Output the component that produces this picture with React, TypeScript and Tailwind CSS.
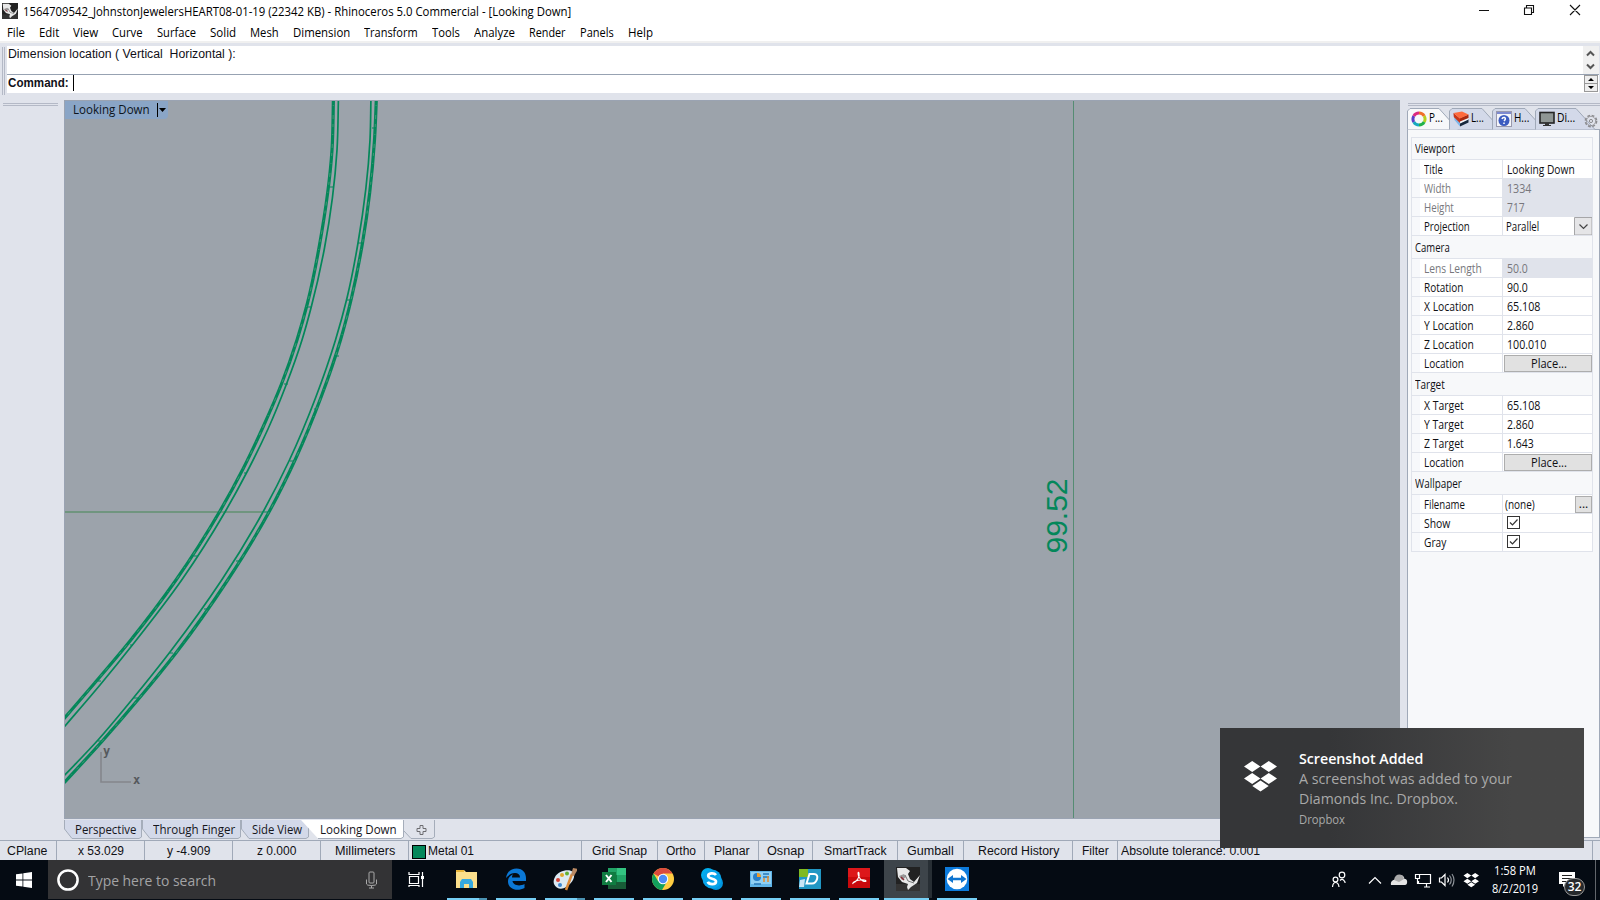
import { useLayoutEffect, useRef, useState } from "react";
import type { ReactNode } from "react";

type Pt = [number, number];

const UI = "font-['Open_Sans','Noto_Sans',sans-serif]";
const ARIAL = "font-['Liberation_Sans',Arial,sans-serif]";

/** Single line of text condensed or stretched to an exact width. */
function Fit({ w, children, className = "" }: { w: number; children: string; className?: string }) {
  const ref = useRef<HTMLSpanElement>(null);
  const [k, setK] = useState(1);
  useLayoutEffect(() => {
    if (ref.current) setK(w / ref.current.offsetWidth);
  }, [w, children]);
  return (
    <span className={`inline-block shrink-0 whitespace-pre ${className}`} style={{ width: w }}>
      <span ref={ref} className="inline-block origin-left" style={{ transform: `scaleX(${k})` }}>
        {children}
      </span>
    </span>
  );
}

/** Cubic Hermite path through points that descend in y. */
function smooth(p: Pt[]) {
  const s = p.slice(1).map((q, i) => (q[0] - p[i][0]) / (q[1] - p[i][1]));
  const m = p.map((_, i) => {
    if (i === 0) return s[0];
    if (i === p.length - 1) return s[i - 1];
    const h0 = p[i][1] - p[i - 1][1];
    const h1 = p[i + 1][1] - p[i][1];
    return (s[i - 1] * h1 + s[i] * h0) / (h0 + h1);
  });
  let d = `M${p[0][0]} ${p[0][1]}`;
  for (let i = 0; i < p.length - 1; i++) {
    const [x0, y0] = p[i];
    const [x1, y1] = p[i + 1];
    const t = (y1 - y0) / 3;
    d += `C${x0 + m[i] * t} ${y0 + t} ${x1 - m[i + 1] * t} ${y1 - t} ${x1} ${y1}`;
  }
  return d;
}

const CURVE_A: Pt[] = [[333.5, 95], [332, 150], [319.500, 245], [307.500, 303], [297, 340], [281.5, 384], [263.500, 426], [243.5, 468], [220, 511], [176, 580], [130, 641], [93, 685], [62, 721]];
const CURVE_B: Pt[] = [[338.5, 95], [337, 150], [324.500, 248], [311, 308], [302, 340], [286.500, 384], [268, 429], [247.5, 471], [225, 512], [181.7, 580], [134, 643], [100, 685], [62, 729.5]];
const CURVE_C: Pt[] = [[371, 95], [370, 140], [358, 243], [347, 298], [335.5, 340], [315.5, 398], [289, 461], [263, 512], [221.7, 580], [170, 652], [131.7, 700], [98, 740], [62, 778]];
const CURVE_D: Pt[] = [[376.5, 95], [374.5, 140], [362.5, 243], [351.5, 298], [340.5, 340], [321.5, 396], [295.500, 459], [269, 512], [227.7, 580], [176.7, 652], [137.7, 700], [101.7, 741.7], [62, 785]];
const TICKS: [number, number, number][] = [[372, 128, 4], [329, 187, 4], [358, 243, 5], [307, 307, 4], [347, 300, 4], [335, 356, 4], [284, 384, 4], [314, 409, 4], [244, 473, 3], [290, 461, 4], [264, 512, 4], [194, 556, 3], [236, 561, 3], [204, 609, 3], [170, 653, 3], [130, 645, 3], [98, 681, 3], [134, 698, 4], [98, 741, 3]];

const MENU: [string, number, number][] = [
  ["File", 18, 14], ["Edit", 20, 14], ["View", 25, 14], ["Curve", 31, 14], ["Surface", 39, 14], ["Solid", 26, 14], ["Mesh", 29, 14],
  ["Dimension", 57, 14], ["Transform", 54, 14], ["Tools", 28, 14], ["Analyze", 41, 14], ["Render", 37, 14], ["Panels", 34, 14], ["Help", 25, 0],
];

function TitleBar() {
  return (
    <div className={`flex h-[21px] items-start text-[12px] leading-[24px] ${UI}`}>
      <span className="ml-[2px] mt-[3px]"><Rhino size={16} /></span>
      <Fit w={548} className="ml-[5px]">1564709542_JohnstonJewelersHEART08-01-19 (22342 KB) - Rhinoceros 5.0 Commercial - [Looking Down]</Fit>
      <svg width="122" height="20" className="ml-auto" fill="none" stroke="#111" strokeWidth="1.1">
        <path d="M1 10.500H11M46.500 8H53.500V14.500H46.500ZM48.500 8V5.500H55.500V12.500H53.500M92 5L102 15M102 5L92 15" />
      </svg>
    </div>
  );
}

function Rhino({ size }: { size: number }) {
  return (
    <svg width={size} height={size} viewBox="0 0 24 24">
      <rect width="24" height="24" fill="#222" />
      <rect y="17" width="24" height="7" fill="#343434" />
      <path d="M1 1H10L14 4L12 7L14 12L18 15L24 8L21 16L15 20L12 23L11 20L12 17L6 15L2 10Z" fill="#e8e8e8" />
      <path d="M2 3L6 6M3 9L8 7L10 10L6 13Z" fill="#999" />
      <path d="M5 10L8 13" stroke="#8b2a35" strokeWidth="1.500" />
      <path d="M12 14L18 16M9 8L12 14" stroke="#777" strokeWidth="1" />
    </svg>
  );
}

function CommandArea() {
  return (
    <div className="flex h-[57px] bg-[#e0e3eb] pr-px pt-[3px]">
      <div className="mr-px mt-[1px] h-[48px] w-[6px] pl-[2px]"><div className="h-full w-[3px] border-x border-[#b4b9c6]" /></div>
      <div className={`flex h-[47px] flex-1 flex-col bg-white text-[12px] text-[#101018] ${ARIAL}`}>
        <div className="flex h-[28px] justify-between">
          <Fit w={228} className="ml-[1px] leading-[16px]">Dimension location ( Vertical  Horizontal ):</Fit>
          <div className="w-[16px] bg-[#f0f0f0]">
            <svg width="16" height="28" fill="none" stroke="#555" strokeWidth="2"><path d="M4 9.500L7.500 6L11 9.500M4 18.500L7.500 22L11 18.500" /></svg>
          </div>
        </div>
        <div className="flex h-[19px] border-t border-[#97a2b2]">
          <Fit w={61} className="ml-[1px] font-bold leading-[16px]">Command:</Fit>
          <span className="ml-[4px] h-[16px] w-px bg-black" />
          <svg width="14" height="18" className="ml-auto mr-[1px]">
            <rect x=".5" y=".5" width="13" height="8" fill="#eee" stroke="#999" /><rect x=".5" y="8.500" width="13" height="8" fill="#eee" stroke="#999" />
            <path d="M4 6H10L7 3ZM4 11H10L7 14Z" fill="#000" />
          </svg>
        </div>
      </div>
    </div>
  );
}

function Viewport() {
  return (
    <div className="relative h-[719px] w-[1336px] border-b border-l border-t border-[#9aa3b2] bg-[#9ca3ab]">
      <svg width="1335" height="717" viewBox="65 101 1335 717" className="block" fill="none">
        <path d="M65 512H263" stroke="#70957f" strokeWidth="2" />
        <path d="M1073.500 101V818" stroke="#558c73" strokeWidth="1" />
        <g stroke="#04875a">
          <path d={smooth(CURVE_A)} strokeWidth="3.200" />
          <path d={smooth(CURVE_B)} strokeWidth="1.700" />
          <path d={smooth(CURVE_C)} strokeWidth="1.700" />
          <path d={smooth(CURVE_D)} strokeWidth="3.200" />
          {TICKS.map(([x, y, w]) => <path key={`${x}-${y}`} d={`M${x} ${y}h${w}`} strokeWidth="1" />)}
        </g>
        <g stroke="#5c9a80" strokeWidth=".7" strokeDasharray="3 7 1 9 4 5">
          <path d={smooth(CURVE_A)} />
          <path d={smooth(CURVE_D)} />
        </g>
        <path d="M101 752V782H131" stroke="#84868c" strokeWidth="1.600" />
        <text x="103" y="755" fill="#55585c" fontSize="12" fontWeight="700" fontFamily="DejaVu Sans Mono, monospace">y</text>
        <text x="133" y="784" fill="#55585c" fontSize="12" fontWeight="700" fontFamily="DejaVu Sans Mono, monospace">x</text>
        <text transform="translate(1067 553.500) rotate(-90)" fill="#04875a" fontSize="30" textLength="75" fontFamily="Liberation Sans, Arial, sans-serif">99.52</text>
      </svg>
      <div className={`absolute left-0 top-0 flex h-[18px] w-[103px] items-center rounded-br-sm bg-[#8aa5c6] text-[12px] text-[#0c1420] ${UI}`}>
        <Fit w={77} className="ml-[8px] leading-[18px]">Looking Down</Fit>
        <svg width="14" height="18" className="ml-[7px]"><path d="M.5 2V16" stroke="#000" /><path d="M2 7H9L5.500 11Z" fill="#000" /></svg>
      </div>
    </div>
  );
}

const VIEW_TABS: [string, number, number, number][] = [["Perspective", 78, 10, 61], ["Through Finger", 99, 10, 82], ["Side View", 68, 11, 50]];

function ViewTabs() {
  return (
    <div className={`flex h-[21px] pt-[1px] text-[12px] text-[#16161c] ${UI}`}>
      {VIEW_TABS.map(([label, w, pad, tw]) => (
        <Slant key={label} w={w} fill="#d3d9e9">
          <Fit w={tw} className="leading-[20px]">{label}</Fit>
          <span style={{ width: pad - 4 }} />
        </Slant>
      ))}
      <div className="relative h-[19px] w-[95px]">
        <svg width="103" height="19" className="absolute -left-2 top-0"><path d="M0 0H102V17L100 18.500H17Z" fill="#fff" /><path d="M17 18.500H100L102.500 17V0" fill="none" stroke="#a5adba" /></svg>
        <Fit w={77} className="relative ml-[11px] leading-[20px]">Looking Down</Fit>
      </div>
      <svg width="32" height="19" fill="none" stroke="#a5adba"><path d="M0 11L7 18.500H28L30.500 17V0" /><path d="M13 8.500H16V5.500H19V8.500H22V11.500H19V14.500H16V11.500H13Z" stroke="#6c6c70" /></svg>
    </div>
  );
}

function Slant({ w, fill, children }: { w: number; fill: string; children: ReactNode }) {
  return (
    <div className="relative h-[19px]" style={{ width: w }}>
      <svg width={w} height="19" className="absolute left-0 top-0"><path d={`M.5 0V9L8 18.500H${w - 3}L${w - 0.5} 17V0`} fill={fill} stroke="#a5adba" /></svg>
      <div className="relative flex justify-end">{children}</div>
    </div>
  );
}

const PANEL_TABS: { label: string; tw: number; w: number; icon: ReactNode }[] = [
  {
    label: "P...", tw: 13, w: 42, icon: (
      <svg width="16" height="16" viewBox="0 0 16 16" fill="none" strokeWidth="3">
        <path d="M8 2A6 6 0 0 1 13.200 5" stroke="#f0702c" /><path d="M13.200 5A6 6 0 0 1 13.200 11" stroke="#b8cf20" />
        <path d="M13.200 11A6 6 0 0 1 8 14" stroke="#22b24a" /><path d="M8 14A6 6 0 0 1 2.800 11" stroke="#18a9c0" />
        <path d="M2.800 11A6 6 0 0 1 2.800 5" stroke="#5a3fc8" /><path d="M2.800 5A6 6 0 0 1 8 2" stroke="#dc2a80" />
      </svg>
    ),
  },
  {
    label: "L...", tw: 12, w: 43, icon: (
      <svg width="16" height="16" viewBox="0 0 16 16">
        <path d="M.5 2L1.500 9L7 15.500V11Z" fill="#7fb5ea" /><path d="M7 12L15.500 8V11.500L7 15.500Z" fill="#18283c" />
        <path d="M.5 2L7 7.500V12L.8 6Z" fill="#c93516" /><path d="M7 10L15.500 6.500V8.500L7 12.500Z" fill="#f4f6fa" />
        <path d="M7 7L15.500 3.500V7L7 10.500Z" fill="#a82a10" /><path d="M.5 2L9 .5L15.500 3.500L7 7.500Z" fill="#ff6a3c" />
      </svg>
    ),
  },
  {
    label: "H...", tw: 14, w: 43, icon: (
      <svg width="16" height="16" viewBox="0 0 16 16"><rect x=".5" y=".5" width="15" height="15" fill="#f4f5fa" stroke="#9999ad" /><path d="M1 1H15V3H1Z" fill="#7d8ad0" /><circle cx="8" cy="9.500" r="5.500" fill="#3c5cc0" /><path d="M6 8Q6.500 6 8.500 6.500Q10.500 7.500 8 10M8 11.500V13" stroke="#fff" strokeWidth="1.500" fill="none" /></svg>
    ),
  },
  {
    label: "Di...", tw: 17, w: 51, icon: (
      <svg width="16" height="16" viewBox="0 0 16 16"><rect x="1" y="1.500" width="14" height="10.500" fill="#8f9694" stroke="#252525" strokeWidth="1.600" /><path d="M6 12H10V14H12V15H4V14H6Z" fill="#333" /></svg>
    ),
  },
];

type Row = { head?: string; hw?: number; label?: string; lw?: number; value?: string; vw?: number; off?: boolean; kind?: "select" | "place" | "file" | "check" };
const ROWS: Row[] = [
  { head: "Viewport", hw: 40 },
  { label: "Title", lw: 19, value: "Looking Down", vw: 68 },
  { label: "Width", lw: 27, value: "1334", vw: 24, off: true },
  { label: "Height", lw: 30, value: "717", vw: 18, off: true },
  { label: "Projection", lw: 46, value: "Parallel", vw: 33, kind: "select" },
  { head: "Camera", hw: 35 },
  { label: "Lens Length", lw: 58, value: "50.0", vw: 21, off: true },
  { label: "Rotation", lw: 39, value: "90.0", vw: 21 },
  { label: "X Location", lw: 50, value: "65.108", vw: 33 },
  { label: "Y Location", lw: 50, value: "2.860", vw: 27 },
  { label: "Z Location", lw: 50, value: "100.010", vw: 39 },
  { label: "Location", lw: 40, kind: "place" },
  { head: "Target", hw: 30 },
  { label: "X Target", lw: 40, value: "65.108", vw: 33 },
  { label: "Y Target", lw: 40, value: "2.860", vw: 27 },
  { label: "Z Target", lw: 40, value: "1.643", vw: 27 },
  { label: "Location", lw: 40, kind: "place" },
  { head: "Wallpaper", hw: 47 },
  { label: "Filename", lw: 41, value: "(none)", vw: 30, kind: "file" },
  { label: "Show", lw: 26, kind: "check" },
  { label: "Gray", lw: 22, kind: "check" },
];

function PropRow({ r }: { r: Row }) {
  if (r.head)
    return <div className="h-[23px] border-b border-[#e0e3eb] leading-[24px] first:h-[22px] first:leading-[22px]"><Fit w={r.hw!} className="ml-[3px]">{r.head}</Fit></div>;
  return (
    <div className={`flex h-[19px] border-b border-[#e0e3eb] bg-white ${r.off ? "text-[#77777c]" : "text-[#101014]"}`}>
      <div className="w-[8px] bg-[#f7f8fb]" />
      <div className="w-[83px] border-r border-[#e0e3eb]"><Fit w={r.lw!} className="ml-[4px] leading-[20px]">{r.label!}</Fit></div>
      <div className={`flex flex-1 items-start justify-between ${r.off ? "bg-[#e0e3eb]" : ""}`}>
        {r.value && <Fit w={r.vw!} className={`leading-[20px] ${r.kind === "select" ? "ml-[3px]" : r.kind === "file" ? "ml-[2px]" : "ml-[4px]"}`}>{r.value}</Fit>}
        {r.kind === "select" && <svg width="18" height="18"><path d="M.5 18V.5H18V18Z" fill="#e5e5e7" stroke="#a6a6a8" /><path d="M5.500 7.500L9.500 11.500L13.500 7.500" fill="none" stroke="#444" strokeWidth="1.200" /></svg>}
        {r.kind === "place" && <div className="ml-[1px] mt-[1px] flex h-[17px] flex-1 justify-center border border-[#adadad] bg-[#e1e1e1]"><Fit w={36} className="mr-[-2px] leading-[16px]">Place...</Fit></div>}
        {r.kind === "file" && <div className="mt-[1px] h-[17px] w-[17px] border border-[#adadad] bg-[#e1e1e1] text-center leading-[14px]">...</div>}
        {r.kind === "check" && <svg width="14" height="14" className="ml-[4px] mr-auto mt-[2px]"><rect x=".5" y=".5" width="12" height="12" fill="#fff" stroke="#333" /><path d="M3 6.500L5.500 9L10.500 3.500" fill="none" stroke="#333" strokeWidth="1.200" /></svg>}
      </div>
    </div>
  );
}

function SidePanel() {
  return (
    <div className="w-[193px] pt-[3px]">
      <div className="ml-[1px] h-[3px] border-y border-[#b4b9c6]" />
      <div className={`mt-[2px] flex h-[21px] text-[12px] ${UI}`}>
        {PANEL_TABS.map((t, i) => (
          <div key={t.label} className="relative h-[21px]" style={{ width: t.w }}>
            <svg width={t.w + 12} height="22" className="absolute left-0 top-0">
              <path d={`M.5 21.500V3L3 .5H${t.w - 10}L${t.w + 9} 21.500`} fill={i === 0 ? "#f7f8fa" : "#d3d9e9"} stroke="#a0a9b8" />
            </svg>
            <div className="relative -left-px flex pl-[5px] pt-[3px]">{t.icon}<Fit w={t.tw + 1} className="ml-[2px] leading-[14px]">{t.label}</Fit></div>
          </div>
        ))}
        <svg width="14" height="20" className="relative -ml-[2px] mt-[6px]" viewBox="0 0 14 20" fill="none" stroke="#8b8b8e"><circle cx="7" cy="7" r="5.600" strokeWidth="1.600" strokeDasharray="2.800 1.600" /><circle cx="7" cy="7" r="4.600" strokeWidth=".7" /><circle cx="7" cy="7" r="1.600" /></svg>
      </div>
      <div className={`h-[709px] border border-[#a0a9b8] bg-[#f7f8fa] pl-[3px] pt-[7px] text-[12px] text-[#101014] ${UI}`}>
        <div className="w-[182px] border-x border-t border-[#e0e3eb]">{ROWS.map((r, i) => <PropRow key={i} r={r} />)}</div>
      </div>
    </div>
  );
}

const STATUS: [string, number, number, number][] = [
  ["CPlane", 57, 7, 40], ["x 53.029", 88, 21, 46], ["y -4.909", 88, 22, 43], ["z 0.000", 88, 24, 39], ["Millimeters", 88, 14, 60],
];
const STATUS2: [string, number, number, number][] = [
  ["Grid Snap", 76, 10, 55], ["Ortho", 47, 8, 30], ["Planar", 54, 9, 36], ["Osnap", 54, 8, 37], ["SmartTrack", 85, 11, 63], ["Gumball", 66, 9, 47],
  ["Record History", 109, 14, 81], ["Filter", 45, 9, 27],
];

function StatusCell({ c }: { c: [string, number, number, number] }) {
  return <div className="border-r border-[#a0a9b8]" style={{ width: c[1], paddingLeft: c[2] }}><Fit w={c[3]}>{c[0]}</Fit></div>;
}

function StatusBar() {
  return (
    <div className={`flex h-[20px] border-t border-[#a0a9b8] bg-[#e0e3eb] text-[12px] leading-[20px] text-[#101014] ${ARIAL}`}>
      {STATUS.map((c) => <StatusCell key={c[0]} c={c} />)}
      <div className="flex w-[173px] border-r border-[#a0a9b8] pl-[3px]"><span className="mt-[4px] h-[14px] w-[14px] border border-black bg-[#04875a]" /><Fit w={46} className="ml-[2px]">Metal 01</Fit></div>
      {STATUS2.map((c) => <StatusCell key={c[0]} c={c} />)}
      <div className="w-[475px] border-r border-[#a0a9b8] pl-[3px]"><Fit w={139}>Absolute tolerance: 0.001</Fit></div>
    </div>
  );
}

function Dropbox({ w, h, className = "" }: { w: number; h: number; className?: string }) {
  return (
    <svg width={w} height={h} viewBox="0 0 33 31" className={className} fill="#fff">
      <path d="M8.200 0L16.400 5.500L8.200 11L0 5.500ZM24.800 0L33 5.500L24.800 11L16.600 5.500ZM8.200 12L16.400 17.500L8.200 23L0 17.500ZM24.800 12L33 17.500L24.800 23L16.600 17.500ZM16.500 19.500L24.700 25L16.500 30.500L8.300 25Z" />
    </svg>
  );
}

function Toast() {
  return (
    <div className={`absolute left-[1220px] top-[728px] flex h-[120px] w-[364px] bg-linear-to-r from-[#353638] from-30% to-[#464646] to-80% ${UI}`}>
      <Dropbox w={33} h={31} className="ml-[23.5px] mt-[33px]" />
      <div className="ml-[22.5px] mt-[20px] flex flex-col text-[15px] text-[#a9a9a9]">
        <Fit w={124} className="h-[20px] font-semibold leading-[20px] text-white">Screenshot Added</Fit>
        <Fit w={213} className="h-[20px] leading-[20px]">A screenshot was added to your</Fit>
        <Fit w={159} className="h-[20px] leading-[20px]">Diamonds Inc. Dropbox.</Fit>
        <Fit w={46} className="mt-[4px] text-[12px] leading-[16px]">Dropbox</Fit>
      </div>
    </div>
  );
}

const APPS: { name: string; split?: boolean; active?: boolean; icon: ReactNode }[] = [
  { name: "explorer", split: true, icon: <><path d="M1 3H9L11 5H22V21H1Z" fill="#fbdf8c" /><path d="M1 3H9V5H1Z" fill="#e9b53a" /><path d="M5 21V15L7 12H16L18 15V21H14V17H9V21Z" fill="#35a9e0" /></> },
  { name: "edge", icon: <path d="M2 11C3 4 8 1.500 12.500 1.500C19 1.500 22 6 22 11V14H8.500C9 18 15 20 20.500 17V21C13 25 4 22 4 14.500C4 11 6 8.500 9 7.200C8 8.500 8 10 8 10.500H16C16 7.500 14 6 11 6C7 6 4 8.500 2 11Z" fill="#0b78d6" /> },
  { name: "paint", split: true, icon: <><path d="M2 10C5 4 16 1 20 5C23 9 20 16 13 20C9 23 3 22 1 17C0 14 1 12 2 10Z" fill="#dce9f2" /><circle cx="5" cy="13" r="2" fill="#d64439" /><circle cx="9" cy="8" r="2" fill="#e0a82e" /><circle cx="14" cy="6.500" r="2" fill="#63b032" /><circle cx="7" cy="18" r="2" fill="#3c87d0" /><path d="M13 23L19 7" stroke="#dc8a3a" strokeWidth="2.500" /><path d="M18 8L20 1L25 2L21 9Z" fill="#ba8963" /></> },
  { name: "excel", icon: <><path d="M6 1H24V22H6Z" fill="#21a366" /><path d="M15 1H24V8H15Z" fill="#33c481" /><path d="M6 8H15V15H6Z" fill="#107c41" /><path d="M6 15H24V22H6Z" fill="#185c37" /><path d="M0 5H14V18H0Z" fill="#107c41" /><path d="M4 8L9.500 15M9.500 8L4 15" stroke="#fff" strokeWidth="2" /></> },
  { name: "chrome", icon: <><circle cx="12" cy="12" r="11" fill="#ffcd42" /><path d="M12 12L2.500 6.500A11 11 0 0 1 21.500 6.500H12Z" fill="#db4a3d" /><path d="M2.500 6.500A11 11 0 0 0 11 23L16 14.500L12 12L7 14Z" fill="#12a05c" /><circle cx="12" cy="12" r="5.200" fill="#fff" /><circle cx="12" cy="12" r="4.200" fill="#4c8bf5" /></> },
  { name: "skype", icon: <><circle cx="8" cy="8" r="7" fill="#00aff0" /><circle cx="16" cy="16" r="7" fill="#0096e0" /><circle cx="12" cy="12" r="9.500" fill="#08a4ea" /><path d="M16 8C14 5.500 8 6 8.200 9C8.500 12.500 16 11 16 14.500C16 18 9 18 7.800 14.800" fill="none" stroke="#fff" strokeWidth="2.700" /></> },
  { name: "control", icon: <><path d="M1 4H23V20H1Z" fill="#5fb4e8" /><path d="M2 5H22V17H2Z" fill="#8fd0f4" /><circle cx="8" cy="10" r="4" fill="#2a7fc8" /><path d="M8 10V6A4 4 0 0 1 12 10Z" fill="#f09c2a" /><path d="M14 7H20M14 10H20M5 17H12" stroke="#2878b8" strokeWidth="1.500" /><path d="M15 11V15M19 9V15" stroke="#e88a2a" strokeWidth="1.500" /></> },
  { name: "design", icon: <><path d="M1 2H23V22H1Z" fill="#2197c4" /><path d="M1 2H10V10H1Z" fill="#7fba20" /><path d="M2 13L7 12L6 20L1 20Z" fill="#c9e6f5" /><path d="M8.500 16.500L11.500 7H16C22 7 19 16.500 14 16.500Z" fill="none" stroke="#fff" strokeWidth="2" /></> },
  { name: "acrobat", icon: <><path d="M1 1H23V21H1Z" fill="#c9090c" /><path d="M1 1H23V10H1Z" fill="#dd171a" /><path d="M6 16C10 15 13 9 12 6C11 4 10.500 7 12 10C14 14 18 15 19 14C19 12 9 13 7 15C5 17 6 17 6 16Z" fill="none" stroke="#fff" strokeWidth="1.100" /></> },
  { name: "rhino", active: true, icon: <Rhino size={24} /> },
  { name: "teamviewer", icon: <><rect width="24" height="24" fill="#0d7bdc" /><circle cx="12" cy="12" r="10.300" fill="#fff" /><path d="M2.500 12L8 8V10.800H16V8L21.500 12L16 16V13.200H8V16Z" fill="#0e74d0" /></> },
];

function Taskbar() {
  return (
    <div className={`flex h-[40px] bg-[#050b13] ${UI}`}>
      <div className="w-[48px] pl-[16px] pt-[12px]"><svg width="16" height="16" fill="#fff"><path d="M0 2.300L6.500 1.400V7.600H0ZM7.300 1.300L16 0V7.600H7.300ZM0 8.400H6.500V14.600L0 13.700ZM7.300 8.400H16V16L7.300 14.700Z" /></svg></div>
      <div className="flex h-[39px] w-[344px] items-center bg-[#333335] text-[15px] text-[#a3a3a5]">
        <svg width="24" height="24" className="ml-[8px]"><circle cx="12" cy="12" r="9.600" fill="none" stroke="#fff" strokeWidth="2.500" /></svg>
        <Fit w={128} className="ml-[8px] leading-[20px]">Type here to search</Fit>
        <svg width="12" height="18" className="ml-auto mr-[14px]" fill="none" stroke="#a9a9a9"><rect x="3" y="1" width="5" height="11" rx="1" /><path d="M.5 8.500V13Q.5 14.500 5.500 14.500Q10.500 14.500 10.500 13V8.500M5.500 14.500V17M3 17H8" /></svg>
      </div>
      <svg width="49" height="40" fill="none" stroke="#fff" strokeWidth="1.200"><path d="M17 12V14.500H27V12M17.500 16.500H26.500V23.500H17.500ZM17 27V25.500H27V27M30.500 12V27" /><path d="M29 16H32V19H29Z" fill="#fff" stroke="none" /></svg>
      {APPS.map((a) => (
        <div key={a.name} className="flex h-[40px] w-[49px] flex-col items-start">
          <div className={`flex h-[38px] items-center justify-center ${a.active ? "ml-[2px] w-[48px] bg-linear-to-r from-[#3d444a] from-92% to-[#272e34] to-92%" : "w-[49px] pl-[2px]"}`}>
            <svg width="24" height="24" viewBox="0 0 24 24">{a.icon}</svg>
          </div>
          <div className={`h-[2px] bg-[#76cff5] ${a.split ? "ml-[6px] w-[40px] border-r-8 border-[#4b93b3]" : a.active ? "ml-[2px] w-[45px]" : "ml-[6px] w-[40px]"}`} />
        </div>
      ))}
      <div className="ml-auto flex">
        <svg width="170" height="40" viewBox="1320 860 170 40" fill="none" stroke="#fff" strokeWidth="1.200">
          <circle cx="1342" cy="875" r="2.800" /><path d="M1340 880.500Q1342.500 877.500 1345 882V883M1332.500 887Q1333 882.500 1335.500 882.500Q1338.500 882.500 1339 887" /><circle cx="1335.500" cy="879.500" r="2.400" />
          <path d="M1369 883.500L1375 877.500L1381 883.500" />
          <path d="M1391 885C1390 880 1395 879 1396 880C1397 873 1404 874 1404.500 879C1408 878 1408 885 1405 885Z" fill="#e5e5e5" stroke="none" />
          <path d="M1394 880C1395 873 1403 873 1404 879L1399 882Z" fill="#aaa" stroke="none" />
          <path d="M1420 874.500H1430.500V883.500H1418.500V881M1424 887H1430M1426.500 884V887M1415.500 874.500H1419.500V878.500H1415.500ZM1417.500 879V884" />
          <path d="M1439.500 878H1441.500L1445 874.500V885.500L1441.500 882H1439.500ZM1447.500 877.500Q1449.500 880 1447.500 882.500" /><path d="M1449.500 875.500Q1453 880 1449.500 884.500M1452 874Q1456 880 1452 886.500" stroke="#8b9096" />
          <g transform="translate(1463.500 873) scale(.47)" fill="#fff" stroke="none"><path d="M8.200 0L16.400 5.500L8.200 11L0 5.500ZM24.800 0L33 5.500L24.800 11L16.600 5.500ZM8.200 12L16.400 17.500L8.200 23L0 17.500ZM24.800 12L33 17.500L24.800 23L16.600 17.500ZM16.500 19.500L24.700 25L16.500 30.500L8.300 25Z" /></g>
        </svg>
        <div className="flex w-[50px] flex-col items-center text-[12px] leading-[18px] text-white">
          <Fit w={42} className="-ml-px mt-[2px]">1:58 PM</Fit>
          <Fit w={46}>8/2/2019</Fit>
        </div>
        <div className="relative w-[60px]">
          <svg width="60" height="40" viewBox="1540 860 60 40"><path d="M1559 872H1575V884H1566L1563 887V884H1559Z" fill="#fff" /><path d="M1562 875.500H1572M1562 878.500H1572M1562 881.500H1569" stroke="#222" /><path d="M1595.500 860V900" stroke="#62666b" /></svg>
          <span className="absolute left-[24px] top-[18px] flex h-[18px] w-[21px] items-center justify-center rounded-full border border-[#999] bg-[#26292c] text-[12px] font-semibold leading-[14px] text-white">32</span>
        </div>
      </div>
    </div>
  );
}

export default function App() {
  return (
    <div className="relative flex h-[900px] w-[1600px] flex-col overflow-hidden bg-white text-black">
      <TitleBar />
      <div className={`flex h-[20px] pl-[7px] text-[12px] leading-[24px] ${UI}`}>
        {MENU.map(([label, w, gap]) => (
          <span key={label} className="flex" style={{ paddingRight: gap }}><Fit w={w}>{label}</Fit></span>
        ))}
      </div>
      <div className="h-[2px] bg-[#f0f0f0]" />
      <CommandArea />
      <div className="flex h-[740px] bg-[#e0e3eb]">
        <div className="w-[64px] pl-[3px] pt-[3px]"><div className="h-[3px] w-[55px] border-y border-[#b4b9c6]" /></div>
        <div className="mr-[7px] flex w-[1336px] flex-col"><Viewport /><ViewTabs /></div>
        <SidePanel />
      </div>
      <StatusBar />
      <Taskbar />
      <Toast />
    </div>
  );
}
